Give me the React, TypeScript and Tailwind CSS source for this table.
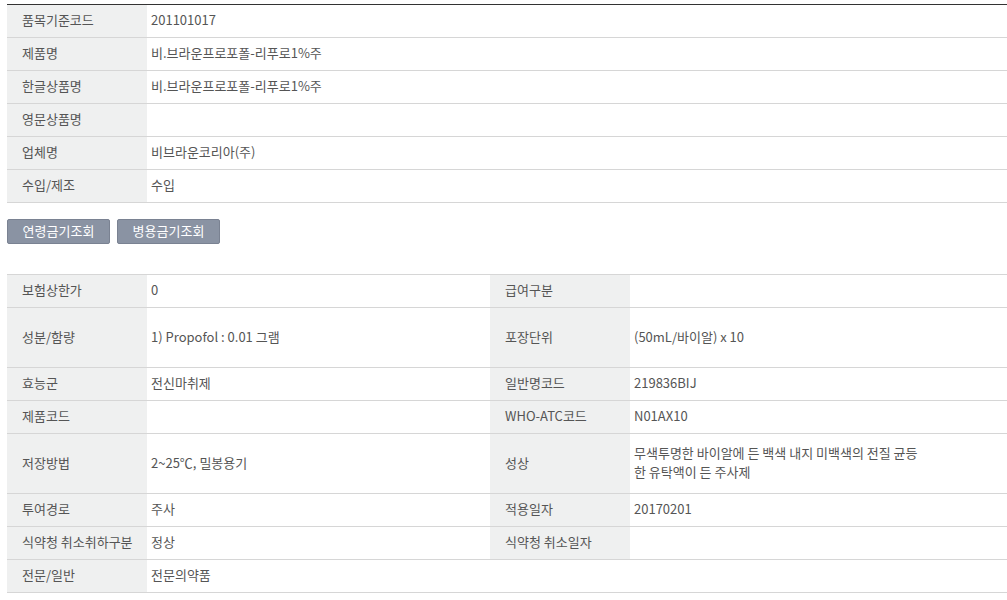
const font = { fontFamily: '"Noto Sans CJK KR", "Liberation Sans", sans-serif' };

type Row = { label: string; value: string };

const productRows: Row[] = [
  { label: '품목기준코드', value: '201101017' },
  { label: '제품명', value: '비.브라운프로포폴-리푸로1%주' },
  { label: '한글상품명', value: '비.브라운프로포폴-리푸로1%주' },
  { label: '영문상품명', value: '' },
  { label: '업체명', value: '비브라운코리아(주)' },
  { label: '수입/제조', value: '수입' },
];

const th = 'bg-[#eff0f0] pl-[15px] pr-1 pb-[3px] text-left font-normal align-middle border-b border-[#d6d6d6]';
const td = 'pl-[4px] pr-2 pb-[3px] text-left align-middle border-b border-[#d6d6d6]';

export default function App() {
  return (
    <div className="bg-white pt-1 pl-[7px] text-[13px] text-[#555] leading-[15px]" style={font}>
      <table className="w-full table-fixed border-collapse border-t border-[#333]">
        <colgroup>
          <col className="w-[140px]" />
          <col />
        </colgroup>
        <tbody>
          {productRows.map(row => (
            <tr key={row.label} className="h-[33px]">
              <th className={th}>{row.label}</th>
              <td className={td}>{row.value}</td>
            </tr>
          ))}
        </tbody>
      </table>

      <div className="flex gap-[7px] mt-4">
        <button className="w-[103px] h-[25px] pb-[2px] bg-[#8a93a3] border border-[#7a8292] rounded-[2px] text-white text-[13px]">
          연령금기조회
        </button>
        <button className="w-[103px] h-[25px] pb-[2px] bg-[#8a93a3] border border-[#7a8292] rounded-[2px] text-white text-[13px]">
          병용금기조회
        </button>
      </div>

      <table className="w-full table-fixed border-collapse border-t border-[#d6d6d6] mt-[30px]">
        <colgroup>
          <col className="w-[140px]" />
          <col className="w-[343px]" />
          <col className="w-[140px]" />
          <col />
        </colgroup>
        <tbody>
          <tr className="h-[33px]">
            <th className={th}>보험상한가</th>
            <td className={td}>0</td>
            <th className={th}>급여구분</th>
            <td className={td}></td>
          </tr>
          <tr className="h-[60px]">
            <th className={th}>성분/함량</th>
            <td className={td}>1) Propofol : 0.01 그램</td>
            <th className={th}>포장단위</th>
            <td className={td}>(50mL/바이알) x 10</td>
          </tr>
          <tr className="h-[33px]">
            <th className={th}>효능군</th>
            <td className={td}>전신마취제</td>
            <th className={th}>일반명코드</th>
            <td className={td}>219836BIJ</td>
          </tr>
          <tr className="h-[33px]">
            <th className={th}>제품코드</th>
            <td className={td}></td>
            <th className={th}>WHO-ATC코드</th>
            <td className={td}>N01AX10</td>
          </tr>
          <tr className="h-[60px]">
            <th className={th}>저장방법</th>
            <td className={td}>2~25℃, 밀봉용기</td>
            <th className={th}>성상</th>
            <td className={td + ' leading-[19px]'}>
              무색투명한 바이알에 든 백색 내지 미백색의 전질 균등
              <br />
              한 유탁액이 든 주사제
            </td>
          </tr>
          <tr className="h-[33px]">
            <th className={th}>투여경로</th>
            <td className={td}>주사</td>
            <th className={th}>적용일자</th>
            <td className={td}>20170201</td>
          </tr>
          <tr className="h-[33px]">
            <th className={th}>식약청 취소취하구분</th>
            <td className={td}>정상</td>
            <th className={th}>식약청 취소일자</th>
            <td className={td}></td>
          </tr>
          <tr className="h-[33px]">
            <th className={th}>전문/일반</th>
            <td className={td} colSpan={3}>전문의약품</td>
          </tr>
        </tbody>
      </table>
    </div>
  );
}
